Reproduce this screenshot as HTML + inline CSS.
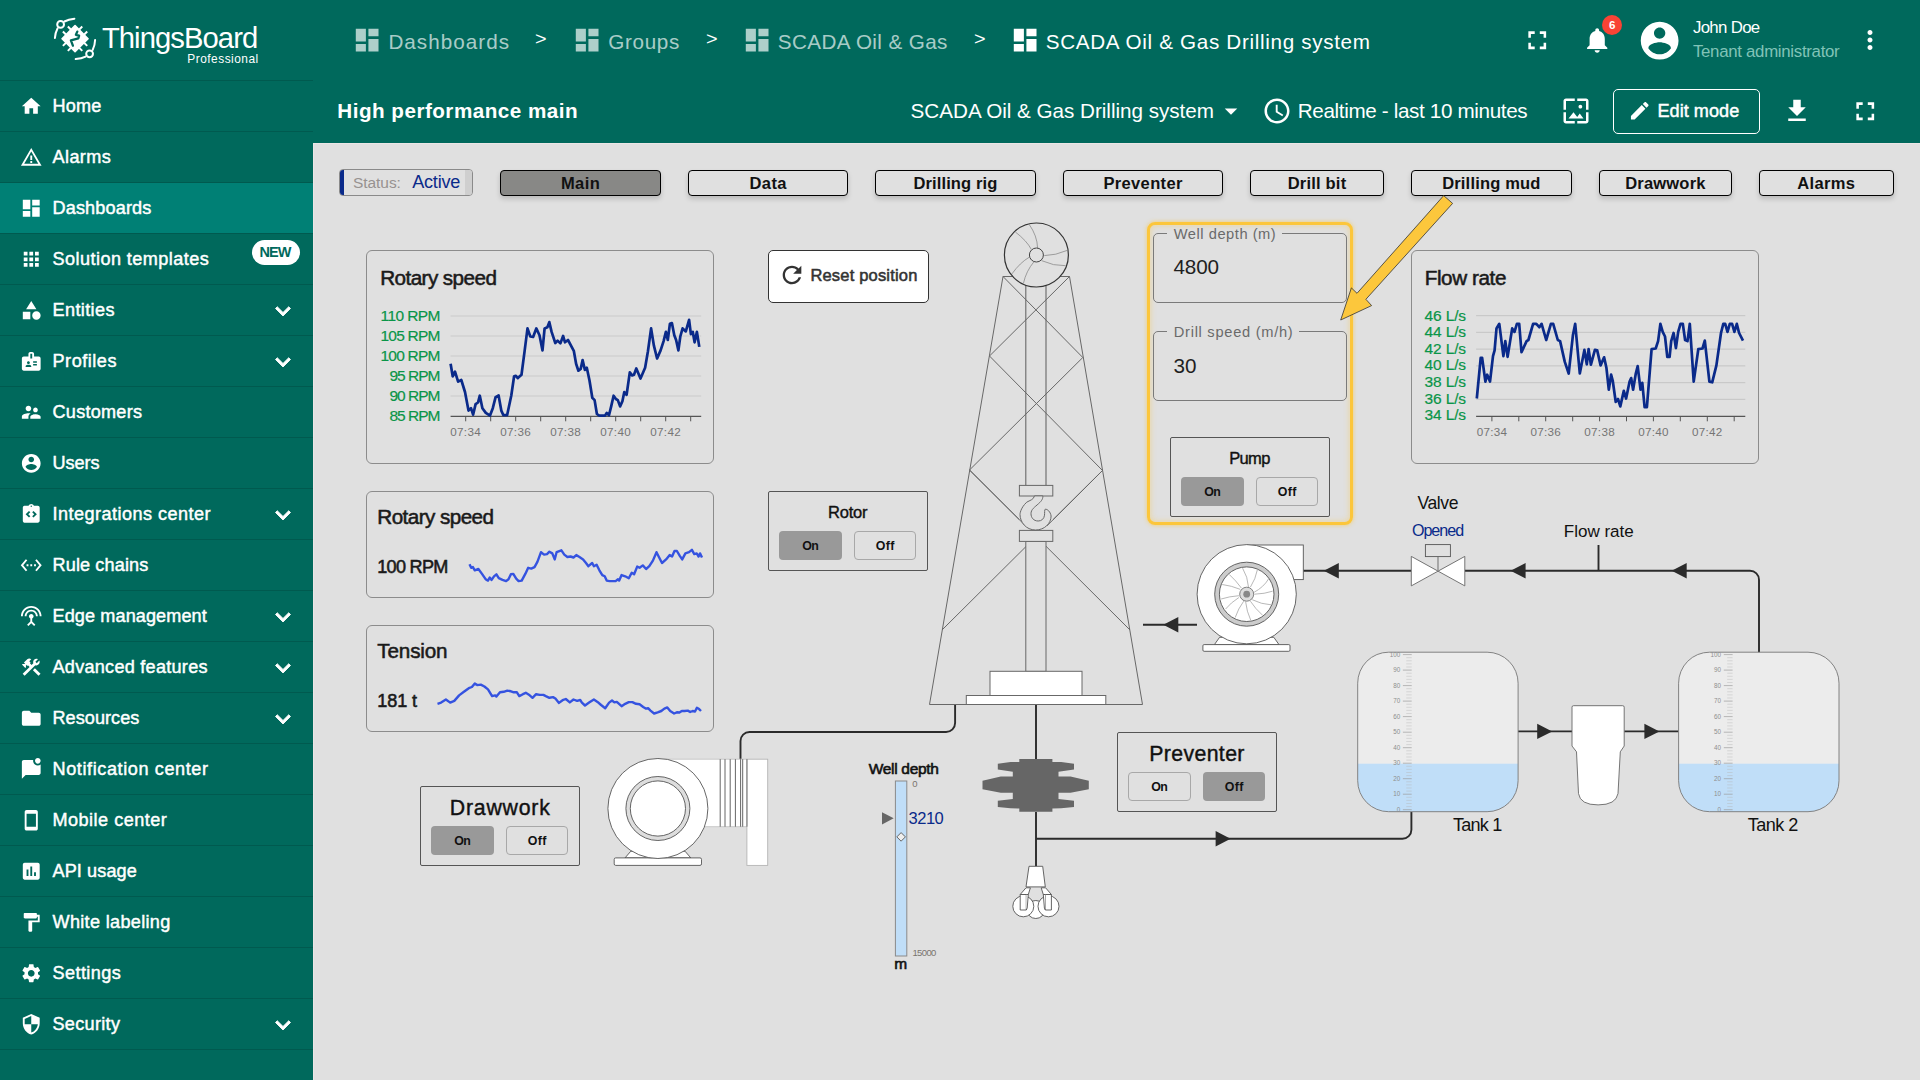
<!DOCTYPE html>
<html lang="en"><head><meta charset="utf-8"><title>ThingsBoard - SCADA Oil &amp; Gas Drilling system</title>
<style>
html,body{margin:0;padding:0}
body{width:1920px;height:1080px;overflow:hidden;background:#e0e0e0;font-family:"Liberation Sans",sans-serif;position:relative}
.t{position:absolute;line-height:20px;white-space:nowrap;margin:0}
.ic{position:absolute;display:block}
.bx{position:absolute;box-sizing:border-box}
#scene{position:absolute;left:0;top:0}
</style></head>
<body>
<div class="bx" style="left:0;top:0;width:313px;height:1080px;background:#00695c"></div>
<div class="bx" style="left:313px;top:0;width:1607px;height:143px;background:#00695c"></div>
<div class="bx" style="left:0;top:80px;width:313px;height:1px;background:rgba(0,0,0,.14)"></div>
<svg class="ic" style="left:19.95px;top:94.55px" width="22.5" height="22.5" viewBox="0 0 24 24"><path fill="#fff" d="M10 20v-6h4v6h5v-8h3L12 3 2 12h3v8z"/></svg>
<div class="bx" style="left:0;top:131px;width:313px;height:1px;background:rgba(0,0,0,.14)"></div>
<svg class="ic" style="left:19.95px;top:145.55px" width="22.5" height="22.5" viewBox="0 0 24 24"><path fill="#fff" d="M12 5.99L19.53 19H4.47L12 5.99M12 2L1 21h22L12 2zm1 14h-2v2h2v-2zm0-6h-2v5h2v-5z"/></svg>
<div class="bx" style="left:0;top:183px;width:313px;height:50px;background:#008075"></div>
<div class="bx" style="left:0;top:182px;width:313px;height:1px;background:rgba(0,0,0,.14)"></div>
<svg class="ic" style="left:19.95px;top:196.55px" width="22.5" height="22.5" viewBox="0 0 24 24"><path fill="#fff" d="M3 13h8V3H3v10zm0 8h8v-6H3v6zm10 0h8V11h-8v10zm0-18v6h8V3h-8z"/></svg>
<div class="bx" style="left:0;top:233px;width:313px;height:1px;background:rgba(0,0,0,.14)"></div>
<svg class="ic" style="left:19.95px;top:247.55px" width="22.5" height="22.5" viewBox="0 0 24 24"><path fill="#fff" d="M4 8h4V4H4v4zm6 12h4v-4h-4v4zm-6 0h4v-4H4v4zm0-6h4v-4H4v4zm6 0h4v-4h-4v4zm6-10v4h4V4h-4zm-6 4h4V4h-4v4zm6 6h4v-4h-4v4zm0 6h4v-4h-4v4z"/></svg>
<div class="bx" style="left:0;top:284px;width:313px;height:1px;background:rgba(0,0,0,.14)"></div>
<svg class="ic" style="left:19.95px;top:298.55px" width="22.5" height="22.5" viewBox="0 0 24 24"><path fill="#fff" d="M12 2l-5.5 9h11L12 2zm5.5 11c-2.49 0-4.5 2.01-4.5 4.5s2.01 4.5 4.5 4.5 4.5-2.01 4.5-4.5-2.01-4.5-4.5-4.5zM3 21.5h8v-8H3v8z"/></svg>
<svg class="ic" style="left:267.50px;top:295.50px" width="30" height="30" viewBox="0 0 24 24"><path fill="#fff" d="M16.59 8.59L12 13.17 7.41 8.59 6 10l6 6 6-6z" stroke="#fff" stroke-width="0.700"/></svg>
<div class="bx" style="left:0;top:335px;width:313px;height:1px;background:rgba(0,0,0,.14)"></div>
<svg class="ic" style="left:19.95px;top:349.55px" width="22.5" height="22.5" viewBox="0 0 24 24"><path fill="#fff" d="M20 7h-5V4c0-1.1-.9-2-2-2h-2c-1.1 0-2 .9-2 2v3H4c-1.1 0-2 .9-2 2v11c0 1.1.9 2 2 2h16c1.1 0 2-.9 2-2V9c0-1.1-.9-2-2-2zM9 12c.83 0 1.5.67 1.5 1.5S9.83 15 9 15s-1.5-.67-1.5-1.5S8.17 12 9 12zm3 6H6v-.75c0-1 2-1.5 3-1.5s3 .5 3 1.5V18zm1-9h-2V4h2v5zm5 7.5h-4V15h4v1.5zm0-3h-4V12h4v1.5z"/></svg>
<svg class="ic" style="left:267.50px;top:346.50px" width="30" height="30" viewBox="0 0 24 24"><path fill="#fff" d="M16.59 8.59L12 13.17 7.41 8.59 6 10l6 6 6-6z" stroke="#fff" stroke-width="0.700"/></svg>
<div class="bx" style="left:0;top:386px;width:313px;height:1px;background:rgba(0,0,0,.14)"></div>
<svg class="ic" style="left:19.95px;top:400.55px" width="22.5" height="22.5" viewBox="0 0 24 24"><path fill="#fff" d="M16.5 12c1.38 0 2.49-1.12 2.49-2.5S17.88 7 16.5 7C15.12 7 14 8.12 14 9.5s1.12 2.5 2.5 2.5zM9 11c1.66 0 2.99-1.34 2.99-3S10.66 5 9 5C7.34 5 6 6.34 6 8s1.34 3 3 3zm7.5 3c-1.83 0-5.5.92-5.5 2.75V19h11v-2.25c0-1.83-3.67-2.75-5.5-2.75zM9 13c-2.33 0-7 1.17-7 3.5V19h7v-2.25c0-.85.33-2.34 2.37-3.47C10.5 13.1 9.66 13 9 13z"/></svg>
<div class="bx" style="left:0;top:437px;width:313px;height:1px;background:rgba(0,0,0,.14)"></div>
<svg class="ic" style="left:19.95px;top:451.55px" width="22.5" height="22.5" viewBox="0 0 24 24"><path fill="#fff" d="M12 2C6.48 2 2 6.48 2 12s4.48 10 10 10 10-4.48 10-10S17.52 2 12 2zm0 3c1.66 0 3 1.34 3 3s-1.34 3-3 3-3-1.34-3-3 1.34-3 3-3zm0 14.2c-2.5 0-4.71-1.28-6-3.22.03-1.99 4-3.08 6-3.08 1.99 0 5.97 1.09 6 3.08-1.29 1.94-3.5 3.22-6 3.22z"/></svg>
<div class="bx" style="left:0;top:488px;width:313px;height:1px;background:rgba(0,0,0,.14)"></div>
<svg class="ic" style="left:19.95px;top:502.55px" width="22.5" height="22.5" viewBox="0 0 24 24"><path fill="#fff" d="M19 3h-4.180C14.4 1.84 13.3 1 12 1s-2.4.84-2.82 2H5c-.14 0-.27.01-.4.04-.39.08-.74.28-1.01.55-.18.18-.33.4-.43.64-.1.23-.16.49-.16.77v14c0 .27.06.54.16.78s.25.45.43.64c.27.27.62.47 1.01.55.13.02.26.03.4.03h14c1.1 0 2-.9 2-2V5c0-1.1-.9-2-2-2zm-8 11.170l-1.410 1.420L6 12l3.590-3.590L11 9.830 8.830 12 11 14.170zm1-9.920c-.41 0-.75-.34-.75-.75s.34-.75.75-.75.75.34.75.75-.34.75-.75.75zm2.410 11.340L13 14.170 15.170 12 13 9.830l1.410-1.420L18 12l-3.590 3.590z"/></svg>
<svg class="ic" style="left:267.50px;top:499.50px" width="30" height="30" viewBox="0 0 24 24"><path fill="#fff" d="M16.59 8.59L12 13.17 7.41 8.59 6 10l6 6 6-6z" stroke="#fff" stroke-width="0.700"/></svg>
<div class="bx" style="left:0;top:539px;width:313px;height:1px;background:rgba(0,0,0,.14)"></div>
<svg class="ic" style="left:19.95px;top:553.55px" width="22.5" height="22.5" viewBox="0 0 24 24"><path fill="#fff" d="M7.77 6.76L6.23 5.48.82 12l5.41 6.52 1.54-1.28L3.42 12l4.35-5.24zM7 13h2v-2H7v2zm10-2h-2v2h2v-2zm-6 2h2v-2h-2v2zm6.77-7.52l-1.54 1.28L20.58 12l-4.35 5.24 1.54 1.28L23.18 12l-5.41-6.52z"/></svg>
<div class="bx" style="left:0;top:590px;width:313px;height:1px;background:rgba(0,0,0,.14)"></div>
<svg class="ic" style="left:19.95px;top:604.55px" width="22.5" height="22.5" viewBox="0 0 24 24"><path fill="#fff" d="M12 5c-3.87 0-7 3.13-7 7h2c0-2.76 2.24-5 5-5s5 2.24 5 5h2c0-3.87-3.13-7-7-7zm1 9.29c.88-.39 1.5-1.26 1.5-2.29 0-1.38-1.12-2.5-2.5-2.5S9.5 10.62 9.5 12c0 1.02.62 1.9 1.5 2.29v3.3L7.59 21 9 22.41l3-3 3 3L16.41 21 13 17.59v-3.3zM12 1C5.93 1 1 5.93 1 12h2c0-4.97 4.03-9 9-9s9 4.030 9 9h2c0-6.070-4.930-11-11-11z"/></svg>
<svg class="ic" style="left:267.50px;top:601.50px" width="30" height="30" viewBox="0 0 24 24"><path fill="#fff" d="M16.59 8.59L12 13.17 7.41 8.59 6 10l6 6 6-6z" stroke="#fff" stroke-width="0.700"/></svg>
<div class="bx" style="left:0;top:641px;width:313px;height:1px;background:rgba(0,0,0,.14)"></div>
<svg class="ic" style="left:19.95px;top:655.55px" width="22.5" height="22.5" viewBox="0 0 24 24"><path fill="#fff" d="M13.783 15.172l2.121-2.121 5.996 5.996-2.121 2.121zM17.5 10c1.93 0 3.5-1.57 3.5-3.5 0-.58-.16-1.12-.41-1.6l-2.7 2.7-1.49-1.49 2.7-2.7c-.48-.25-1.020-.41-1.6-.41C15.570 3 14 4.570 14 6.5c0 .41.080.8.210 1.160l-1.850 1.850-1.780-1.780.710-.710-1.410-1.410L12 3.490c-1.170-1.170-3.070-1.170-4.240 0L4.220 7.030l1.410 1.410H2.810l-.710.710 3.540 3.540.710-.710V9.150l1.410 1.410.710-.710 1.780 1.780-7.410 7.410 2.120 2.120L16.340 9.790c.360.130.750.210 1.160.210z"/></svg>
<svg class="ic" style="left:267.50px;top:652.50px" width="30" height="30" viewBox="0 0 24 24"><path fill="#fff" d="M16.59 8.59L12 13.17 7.41 8.59 6 10l6 6 6-6z" stroke="#fff" stroke-width="0.700"/></svg>
<div class="bx" style="left:0;top:692px;width:313px;height:1px;background:rgba(0,0,0,.14)"></div>
<svg class="ic" style="left:19.95px;top:706.55px" width="22.5" height="22.5" viewBox="0 0 24 24"><path fill="#fff" d="M10 4H4c-1.1 0-1.99.9-1.99 2L2 18c0 1.1.9 2 2 2h16c1.1 0 2-.9 2-2V8c0-1.1-.9-2-2-2h-8l-2-2z"/></svg>
<svg class="ic" style="left:267.50px;top:703.50px" width="30" height="30" viewBox="0 0 24 24"><path fill="#fff" d="M16.59 8.59L12 13.17 7.41 8.59 6 10l6 6 6-6z" stroke="#fff" stroke-width="0.700"/></svg>
<div class="bx" style="left:0;top:743px;width:313px;height:1px;background:rgba(0,0,0,.14)"></div>
<svg class="ic" style="left:19.95px;top:757.55px" width="22.5" height="22.5" viewBox="0 0 24 24"><path fill="#fff" d="M22 6.98V16c0 1.1-.9 2-2 2H6l-4 4V4c0-1.1.9-2 2-2h10.1c-.06.32-.1.66-.1 1 0 2.76 2.24 5 5 5 1.13 0 2.16-.39 3-1.020zM16 3c0 1.660 1.340 3 3 3s3-1.340 3-3-1.340-3-3-3-3 1.340-3 3z"/></svg>
<div class="bx" style="left:0;top:794px;width:313px;height:1px;background:rgba(0,0,0,.14)"></div>
<svg class="ic" style="left:19.95px;top:808.55px" width="22.5" height="22.5" viewBox="0 0 24 24"><path fill="#fff" d="M17 1.01L7 1c-1.1 0-2 .9-2 2v18c0 1.1.9 2 2 2h10c1.1 0 2-.9 2-2V3c0-1.1-.9-1.99-2-1.990zM17 19H7V5h10v14z"/></svg>
<div class="bx" style="left:0;top:845px;width:313px;height:1px;background:rgba(0,0,0,.14)"></div>
<svg class="ic" style="left:19.95px;top:859.55px" width="22.5" height="22.5" viewBox="0 0 24 24"><path fill="#fff" d="M19 3H5c-1.1 0-2 .9-2 2v14c0 1.1.9 2 2 2h14c1.1 0 2-.9 2-2V5c0-1.1-.9-2-2-2zM9 17H7v-7h2v7zm4 0h-2V7h2v10zm4 0h-2v-4h2v4z"/></svg>
<div class="bx" style="left:0;top:896px;width:313px;height:1px;background:rgba(0,0,0,.14)"></div>
<svg class="ic" style="left:19.95px;top:910.55px" width="22.5" height="22.5" viewBox="0 0 24 24"><path fill="#fff" d="M18 4V3c0-.55-.45-1-1-1H5c-.55 0-1 .45-1 1v4c0 .55.45 1 1 1h12c.55 0 1-.45 1-1V6h1v4H9v11c0 .55.45 1 1 1h2c.55 0 1-.45 1-1v-9h8V4h-3z"/></svg>
<div class="bx" style="left:0;top:947px;width:313px;height:1px;background:rgba(0,0,0,.14)"></div>
<svg class="ic" style="left:19.95px;top:961.55px" width="22.5" height="22.5" viewBox="0 0 24 24"><path fill="#fff" d="M19.14 12.94c.04-.3.06-.61.06-.94 0-.32-.02-.64-.07-.94l2.030-1.580c.18-.14.23-.41.12-.61l-1.920-3.320c-.12-.22-.37-.29-.59-.22l-2.390.960c-.5-.38-1.030-.7-1.620-.94l-.360-2.540c-.04-.24-.24-.41-.48-.41h-3.840c-.24 0-.43.17-.47.41l-.360 2.540c-.59.24-1.130.57-1.620.94l-2.390-.960c-.22-.08-.47 0-.59.22L2.740 8.870c-.12.21-.08.47.12.61l2.030 1.580c-.05.3-.09.63-.09.94s.02.64.07.94l-2.030 1.580c-.18.14-.23.41-.12.61l1.920 3.320c.12.22.37.29.59.22l2.390-.960c.5.38 1.030.7 1.620.94l.360 2.540c.05.24.24.41.48.41h3.840c.24 0 .44-.17.47-.41l.360-2.540c.59-.24 1.130-.56 1.620-.94l2.390.960c.22.08.47 0 .59-.22l1.920-3.320c.12-.22.07-.47-.12-.61l-2.010-1.580zM12 15.600c-1.980 0-3.600-1.620-3.600-3.600s1.620-3.600 3.600-3.600 3.600 1.620 3.600 3.600-1.620 3.600-3.600 3.600z"/></svg>
<div class="bx" style="left:0;top:998px;width:313px;height:1px;background:rgba(0,0,0,.14)"></div>
<svg class="ic" style="left:19.95px;top:1012.55px" width="22.5" height="22.5" viewBox="0 0 24 24"><path fill="#fff" d="M12 1L3 5v6c0 5.55 3.84 10.74 9 12 5.16-1.26 9-6.45 9-12V5l-9-4zm0 10.990h7c-.53 4.120-3.280 7.790-7 8.940V12H5V6.300l7-3.110v8.800z"/></svg>
<svg class="ic" style="left:267.50px;top:1009.50px" width="30" height="30" viewBox="0 0 24 24"><path fill="#fff" d="M16.59 8.59L12 13.17 7.41 8.59 6 10l6 6 6-6z" stroke="#fff" stroke-width="0.700"/></svg>
<div class="bx" style="left:0;top:1049px;width:313px;height:1px;background:rgba(0,0,0,.14)"></div>
<div class="bx" style="left:313px;top:143px;width:1607px;height:937px;border-left:1px solid #ebe6e6;border-top:1px solid #ebe6e6"></div>
<div class="bx" style="left:252px;top:239.5px;width:48px;height:25px;border-radius:13px;background:#fff"></div>
<svg class="ic" style="left:50px;top:14px" width="48" height="52" viewBox="50 14 48 52">
<g fill="none" stroke="#fff" stroke-width="2" stroke-linecap="round">
<path d="M54.900 38 Q55.300 32.500 57.600 28.200"/><path d="M64.400 21.500 Q68.500 19.400 74.400 18.700"/>
<circle cx="60.600" cy="24.400" r="3.400"/>
<path d="M95.100 40 Q94.900 45.500 92.700 49.900"/><path d="M85.600 56.600 Q81.500 58.700 75.700 59.100"/>
<circle cx="89.600" cy="53.800" r="3.400"/>
</g>
<g transform="translate(75.050 38.700) rotate(45)">
<g stroke="#fff" stroke-width="2" stroke-linecap="butt">
<path d="M-3.500 -13.700V13.700M3.500 -13.700V13.700M-13.700 -3.500H13.700M-13.700 3.500H13.700"/>
</g>
<rect x="-10" y="-10" width="20" height="20" rx="0.800" fill="#fff"/>
</g>
<path d="M77.300 31.600L75.900 34.800L79.100 35.600L78.400 38.300L70.900 40.400L72.900 45.700" fill="none" stroke="#00695c" stroke-width="2.300" stroke-linecap="round" stroke-linejoin="round"/>
</svg>
<svg class="ic" style="left:352.45px;top:24.85px" width="30.3" height="30.3" viewBox="0 0 24 24"><path fill="rgba(255,255,255,.68)" d="M3 13h8V3H3v10zm0 8h8v-6H3v6zm10 0h8V11h-8v10zm0-18v6h8V3h-8z"/></svg>
<svg class="ic" style="left:572.05px;top:24.85px" width="30.3" height="30.3" viewBox="0 0 24 24"><path fill="rgba(255,255,255,.68)" d="M3 13h8V3H3v10zm0 8h8v-6H3v6zm10 0h8V11h-8v10zm0-18v6h8V3h-8z"/></svg>
<svg class="ic" style="left:742.45px;top:24.85px" width="30.3" height="30.3" viewBox="0 0 24 24"><path fill="rgba(255,255,255,.68)" d="M3 13h8V3H3v10zm0 8h8v-6H3v6zm10 0h8V11h-8v10zm0-18v6h8V3h-8z"/></svg>
<svg class="ic" style="left:1010.05px;top:24.85px" width="30.3" height="30.3" viewBox="0 0 24 24"><path fill="#fff" d="M3 13h8V3H3v10zm0 8h8v-6H3v6zm10 0h8V11h-8v10zm0-18v6h8V3h-8z"/></svg>
<svg class="ic" style="left:1522.15px;top:24.75px" width="30.5" height="30.5" viewBox="0 0 24 24"><path fill="#fff" d="M7 14H5v5h5v-2H7v-3zm-2-4h2V7h3V5H5v5zm12 7h-3v2h5v-5h-2v3zM14 5v2h3v3h2V5h-5z"/></svg>
<svg class="ic" style="left:1582.10px;top:24.80px" width="30.4" height="30.4" viewBox="0 0 24 24"><path fill="#fff" d="M12 22c1.1 0 2-.9 2-2h-4c0 1.1.89 2 2 2zm6-6v-5c0-3.070-1.640-5.640-4.500-6.320V4c0-.83-.67-1.500-1.500-1.500s-1.500.670-1.500 1.500v.680C7.630 5.360 6 7.920 6 11v5l-2 2v1h16v-1l-2-2z"/></svg>
<div class="bx" style="left:1602px;top:15px;width:20px;height:20px;border-radius:10px;background:#f84335"></div>
<svg class="ic" style="left:1637.45px;top:17.75px" width="45.3" height="45.3" viewBox="0 0 24 24"><path fill="#fff" d="M12 2C6.48 2 2 6.48 2 12s4.48 10 10 10 10-4.48 10-10S17.52 2 12 2zm0 3c1.66 0 3 1.34 3 3s-1.34 3-3 3-3-1.34-3-3 1.34-3 3-3zm0 14.2c-2.5 0-4.71-1.28-6-3.22.03-1.99 4-3.08 6-3.08 1.99 0 5.97 1.09 6 3.08-1.29 1.94-3.5 3.22-6 3.22z"/></svg>
<svg class="ic" style="left:1854.80px;top:25.40px" width="30" height="30" viewBox="0 0 24 24"><path fill="#fff" d="M12 8c1.1 0 2-.9 2-2s-.9-2-2-2-2 .9-2 2 .9 2 2 2zm0 2c-1.1 0-2 .9-2 2s.9 2 2 2 2-.9 2-2-.9-2-2-2zm0 6c-1.1 0-2 .9-2 2s.9 2 2 2 2-.9 2-2-.9-2-2-2z"/></svg>
<svg class="ic" style="left:1215.50px;top:95.50px" width="30" height="30" viewBox="0 0 24 24"><path fill="#fff" d="M7 10l5 5 5-5z"/></svg>
<svg class="ic" style="left:1262.40px;top:96.00px" width="30" height="30" viewBox="0 0 24 24"><path fill="#fff" d="M11.99 2C6.47 2 2 6.48 2 12s4.47 10 9.99 10C17.52 22 22 17.52 22 12S17.52 2 11.99 2zM12 20c-4.42 0-8-3.58-8-8s3.58-8 8-8 8 3.58 8 8-3.58 8-8 8zm.5-13H11v6l5.25 3.150.750-1.230-4.500-2.670z"/></svg>
<svg class="ic" style="left:1560.60px;top:96.00px" width="30" height="30" viewBox="0 0 24 24"><path fill="#fff" d="M4 4h7V2H4c-1.1 0-2 .9-2 2v7h2V4zm6 9l-4 5h12l-3-4-2.030 2.710L10 13zm7-4.500c0-.83-.67-1.500-1.500-1.500S14 7.670 14 8.500s.670 1.500 1.500 1.500S17 9.330 17 8.500zM20 2h-7v2h7v7h2V4c0-1.100-.900-2-2-2zm0 18h-7v2h7c1.100 0 2-.900 2-2v-7h-2v7zM4 13H2v7c0 1.100.900 2 2 2h7v-2H4v-7z"/></svg>
<div class="bx" style="left:1613px;top:89px;width:147px;height:45px;border:1px solid #fff;border-radius:5px"></div>
<svg class="ic" style="left:1627.55px;top:98.85px" width="23.5" height="23.5" viewBox="0 0 24 24"><path fill="#fff" d="M3 17.25V21h3.750L17.810 9.940l-3.750-3.750L3 17.250zM20.710 7.040c.390-.390.390-1.020 0-1.410l-2.340-2.340c-.390-.390-1.020-.390-1.410 0l-1.830 1.830 3.750 3.750 1.830-1.830z"/></svg>
<svg class="ic" style="left:1782.40px;top:96.00px" width="30" height="30" viewBox="0 0 24 24"><path fill="#fff" d="M19 9h-4V3H9v6H5l7 7 7-7zM5 18v2h14v-2H5z"/></svg>
<svg class="ic" style="left:1849.75px;top:95.75px" width="30.5" height="30.5" viewBox="0 0 24 24"><path fill="#fff" d="M7 14H5v5h5v-2H7v-3zm-2-4h2V7h3V5H5v5zm12 7h-3v2h5v-5h-2v3zM14 5v2h3v3h2V5h-5z"/></svg>
<div class="bx" style="left:339.4px;top:169.3px;width:133.2px;height:27px;border:1px solid #8a8a8a;border-radius:4px;overflow:hidden;background:#e0e0e0"><div style="position:absolute;left:0;top:0;width:4px;height:100%;background:#0a2a8a"></div><div style="position:absolute;right:0;top:0;width:7px;height:100%;background:#cfcfcf"></div></div>
<div class="bx" style="left:500px;top:170px;width:161px;height:26px;border:1px solid #000;border-radius:4px;background:#888886;box-shadow:0 3px 5px rgba(0,0,0,.17)"></div>
<div class="bx" style="left:688px;top:170px;width:160px;height:26px;border:1px solid #000;border-radius:4px;background:#e0e0e0;box-shadow:0 3px 5px rgba(0,0,0,.17)"></div>
<div class="bx" style="left:875px;top:170px;width:161px;height:26px;border:1px solid #000;border-radius:4px;background:#e0e0e0;box-shadow:0 3px 5px rgba(0,0,0,.17)"></div>
<div class="bx" style="left:1063px;top:170px;width:160px;height:26px;border:1px solid #000;border-radius:4px;background:#e0e0e0;box-shadow:0 3px 5px rgba(0,0,0,.17)"></div>
<div class="bx" style="left:1250px;top:170px;width:134px;height:26px;border:1px solid #000;border-radius:4px;background:#e0e0e0;box-shadow:0 3px 5px rgba(0,0,0,.17)"></div>
<div class="bx" style="left:1411px;top:170px;width:161px;height:26px;border:1px solid #000;border-radius:4px;background:#e0e0e0;box-shadow:0 3px 5px rgba(0,0,0,.17)"></div>
<div class="bx" style="left:1599px;top:170px;width:133px;height:26px;border:1px solid #000;border-radius:4px;background:#e0e0e0;box-shadow:0 3px 5px rgba(0,0,0,.17)"></div>
<div class="bx" style="left:1759px;top:170px;width:135px;height:26px;border:1px solid #000;border-radius:4px;background:#e0e0e0;box-shadow:0 3px 5px rgba(0,0,0,.17)"></div>
<div class="bx" style="left:366px;top:250px;width:348.0px;height:214.0px;border:1px solid #8c8c8c;border-radius:6px"></div>
<div class="bx" style="left:366px;top:491px;width:348.0px;height:107.0px;border:1px solid #8c8c8c;border-radius:6px"></div>
<div class="bx" style="left:366px;top:625px;width:348.0px;height:107.0px;border:1px solid #8c8c8c;border-radius:6px"></div>
<div class="bx" style="left:1411px;top:250px;width:348.0px;height:214.0px;border:1px solid #8c8c8c;border-radius:6px"></div>
<div class="bx" style="left:767.9px;top:249.8px;width:161.2px;height:53px;border:1px solid #333;border-radius:5px;background:#fff"></div>
<svg class="ic" style="left:778.00px;top:261.20px" width="28" height="28" viewBox="0 0 24 24"><path fill="#333" d="M17.65 6.35C16.2 4.9 14.21 4 12 4c-4.42 0-7.99 3.58-7.990 8s3.570 8 7.990 8c3.730 0 6.840-2.550 7.730-6h-2.080c-.820 2.330-3.040 4-5.650 4-3.310 0-6-2.690-6-6s2.690-6 6-6c1.660 0 3.140.690 4.220 1.780L13 11h7V4l-2.350 2.350z"/></svg>
<div class="bx" style="left:768px;top:491px;width:160px;height:80px;border:1px solid #555;border-radius:2px"></div>
<div class="bx" style="left:779px;top:531px;width:63px;height:29px;border-radius:4px;background:#999"></div>
<div class="bx" style="left:854px;top:531px;width:62px;height:29px;border-radius:4px;border:1px solid #a8a8a8"></div>
<div class="bx" style="left:1170px;top:437px;width:160px;height:80px;border:1px solid #555;border-radius:2px"></div>
<div class="bx" style="left:1181px;top:477px;width:63px;height:29px;border-radius:4px;background:#999"></div>
<div class="bx" style="left:1256px;top:477px;width:62px;height:29px;border-radius:4px;border:1px solid #a8a8a8"></div>
<div class="bx" style="left:1117px;top:732px;width:160px;height:80px;border:1px solid #555;border-radius:2px"></div>
<div class="bx" style="left:1128px;top:772px;width:63px;height:29px;border-radius:4px;border:1px solid #a8a8a8"></div>
<div class="bx" style="left:1203px;top:772px;width:62px;height:29px;border-radius:4px;background:#999"></div>
<div class="bx" style="left:420px;top:786px;width:160px;height:80px;border:1px solid #555;border-radius:2px"></div>
<div class="bx" style="left:431px;top:826px;width:63px;height:29px;border-radius:4px;background:#999"></div>
<div class="bx" style="left:506px;top:826px;width:62px;height:29px;border-radius:4px;border:1px solid #a8a8a8"></div>
<div class="bx" style="left:1147px;top:222px;width:206px;height:303px;border:3px solid #fcc63b;border-radius:8px;box-shadow:0 0 4px rgba(252,198,59,.7),inset 0 0 6px rgba(252,198,59,.45)"></div>
<div class="bx" style="left:1153px;top:233px;width:194px;height:70px;border:1px solid #7a7a7a;border-radius:5px"></div>
<div class="bx" style="left:1167px;top:231px;width:115.0px;height:5px;background:#e0e0e0"></div>
<div class="bx" style="left:1153px;top:331px;width:194px;height:70px;border:1px solid #7a7a7a;border-radius:5px"></div>
<div class="bx" style="left:1167px;top:329px;width:132.0px;height:5px;background:#e0e0e0"></div>
<svg id="scene" width="1920" height="1080" viewBox="0 0 1920 1080"><line x1="450.6" x2="701.2" y1="316.0" y2="316.0" stroke="#c9c9c9" stroke-width="1.2"/>
<line x1="450.6" x2="701.2" y1="336.0" y2="336.0" stroke="#c9c9c9" stroke-width="1.2"/>
<line x1="450.6" x2="701.2" y1="356.0" y2="356.0" stroke="#c9c9c9" stroke-width="1.2"/>
<line x1="450.6" x2="701.2" y1="376.0" y2="376.0" stroke="#c9c9c9" stroke-width="1.2"/>
<line x1="450.6" x2="701.2" y1="396.0" y2="396.0" stroke="#c9c9c9" stroke-width="1.2"/>
<line x1="450.6" x2="701.2" y1="416.300" y2="416.300" stroke="#555" stroke-width="1.300"/>
<line x1="465.7" x2="465.7" y1="416" y2="421.300" stroke="#555" stroke-width="1"/>
<line x1="490.7" x2="490.7" y1="416" y2="421.300" stroke="#555" stroke-width="1"/>
<line x1="515.7" x2="515.7" y1="416" y2="421.300" stroke="#555" stroke-width="1"/>
<line x1="540.7" x2="540.7" y1="416" y2="421.300" stroke="#555" stroke-width="1"/>
<line x1="565.7" x2="565.7" y1="416" y2="421.300" stroke="#555" stroke-width="1"/>
<line x1="590.7" x2="590.7" y1="416" y2="421.300" stroke="#555" stroke-width="1"/>
<line x1="615.7" x2="615.7" y1="416" y2="421.300" stroke="#555" stroke-width="1"/>
<line x1="640.7" x2="640.7" y1="416" y2="421.300" stroke="#555" stroke-width="1"/>
<line x1="665.7" x2="665.7" y1="416" y2="421.300" stroke="#555" stroke-width="1"/>
<line x1="690.7" x2="690.7" y1="416" y2="421.300" stroke="#555" stroke-width="1"/>
<polyline fill="none" stroke="#0a2a8a" stroke-width="2.7" stroke-linejoin="round" points="450.6,363.8 452.7,376.3 455.0,371.7 458.1,381.6 461.3,380.0 465.0,392.0 468.5,410.6 471.0,408.2 473.1,414.7 475.6,404.1 478.0,402.5 479.8,395.7 482.4,408.2 485.8,412.9 490.0,415.6 492.8,408.2 495.6,397.1 498.6,395.5 501.3,410.6 503.4,415.2 507.1,415.2 511.3,395.5 514.1,376.3 515.9,375.8 517.8,378.1 521.5,374.7 524.7,350.4 527.5,328.4 530.3,336.5 533.1,336.9 536.3,328.4 539.5,335.3 542.5,350.4 544.6,328.4 547.4,327.2 549.3,322.1 551.6,331.9 555.3,343.0 557.6,340.6 560.4,343.4 563.1,336.0 565.0,342.3 568.0,340.0 571.0,345.7 573.8,350.8 576.1,363.8 578.4,370.7 580.7,368.9 582.6,360.1 584.9,370.0 586.8,367.7 589.5,380.5 592.3,397.8 594.6,400.1 596.9,414.0 599.3,415.6 605.0,415.6 606.7,412.9 609.0,415.2 611.3,405.9 613.6,395.7 615.9,399.0 617.8,400.1 620.1,406.4 622.4,401.3 624.3,392.0 626.6,394.8 629.8,372.4 632.1,375.4 634.0,374.7 636.3,368.4 640.5,378.6 645.1,367.7 647.9,351.5 651.1,328.4 653.9,345.7 657.1,358.5 660.6,350.4 663.6,341.1 665.9,331.9 667.8,340.0 669.9,323.8 671.9,323.1 674.3,335.3 676.1,340.0 678.4,350.4 680.3,336.5 682.6,328.4 685.8,331.4 689.1,319.8 690.9,334.2 692.8,331.9 694.6,342.3 696.9,331.9 699.3,346.9"/>
<line x1="1476.1" x2="1745.3" y1="315.7" y2="315.7" stroke="#c9c9c9" stroke-width="1.2"/>
<line x1="1476.1" x2="1745.3" y1="332.4" y2="332.4" stroke="#c9c9c9" stroke-width="1.2"/>
<line x1="1476.1" x2="1745.3" y1="349.2" y2="349.2" stroke="#c9c9c9" stroke-width="1.2"/>
<line x1="1476.1" x2="1745.3" y1="365.9" y2="365.9" stroke="#c9c9c9" stroke-width="1.2"/>
<line x1="1476.1" x2="1745.3" y1="382.7" y2="382.7" stroke="#c9c9c9" stroke-width="1.2"/>
<line x1="1476.1" x2="1745.3" y1="399.4" y2="399.4" stroke="#c9c9c9" stroke-width="1.2"/>
<line x1="1476.1" x2="1745.3" y1="416.300" y2="416.300" stroke="#555" stroke-width="1.300"/>
<line x1="1491.9" x2="1491.9" y1="416" y2="421.300" stroke="#555" stroke-width="1"/>
<line x1="1518.8" x2="1518.8" y1="416" y2="421.300" stroke="#555" stroke-width="1"/>
<line x1="1545.7" x2="1545.7" y1="416" y2="421.300" stroke="#555" stroke-width="1"/>
<line x1="1572.7" x2="1572.7" y1="416" y2="421.300" stroke="#555" stroke-width="1"/>
<line x1="1599.6" x2="1599.6" y1="416" y2="421.300" stroke="#555" stroke-width="1"/>
<line x1="1626.5" x2="1626.5" y1="416" y2="421.300" stroke="#555" stroke-width="1"/>
<line x1="1653.4" x2="1653.4" y1="416" y2="421.300" stroke="#555" stroke-width="1"/>
<line x1="1680.3" x2="1680.3" y1="416" y2="421.300" stroke="#555" stroke-width="1"/>
<line x1="1707.3" x2="1707.3" y1="416" y2="421.300" stroke="#555" stroke-width="1"/>
<line x1="1734.2" x2="1734.2" y1="416" y2="421.300" stroke="#555" stroke-width="1"/>
<polyline fill="none" stroke="#0a2a8a" stroke-width="2.7" stroke-linejoin="round" points="1476.8,398.5 1480.7,357.8 1482.1,357.8 1485.4,381.6 1487.2,374.7 1490.0,381.6 1493.0,356.2 1494.6,350.4 1496.5,328.4 1499.3,323.8 1503.4,356.2 1505.3,341.1 1507.6,356.9 1512.2,328.4 1514.5,331.9 1516.9,323.8 1519.2,323.8 1521.5,352.2 1526.6,341.1 1528.4,340.0 1533.1,323.8 1536.3,323.8 1539.3,327.2 1541.6,323.8 1546.2,340.0 1550.9,323.8 1553.2,323.8 1557.8,340.0 1560.1,341.1 1564.8,361.9 1568.7,373.5 1572.9,335.3 1575.2,323.8 1579.8,373.5 1584.4,349.9 1586.8,364.3 1588.6,349.2 1590.9,364.7 1594.9,349.9 1597.2,350.4 1600.6,365.4 1604.1,357.3 1606.4,367.7 1608.8,389.7 1611.1,374.7 1612.7,380.5 1615.7,401.8 1618.0,399.0 1620.3,406.4 1623.8,390.9 1626.1,398.5 1629.6,381.6 1631.2,378.1 1633.1,389.7 1635.8,373.5 1637.7,366.1 1640.5,389.7 1642.3,382.8 1644.6,407.1 1646.9,407.1 1651.6,349.2 1655.7,348.5 1658.1,341.1 1660.4,323.8 1662.7,331.9 1665.0,336.5 1667.3,356.9 1669.6,356.9 1671.2,341.1 1673.6,333.0 1675.9,348.1 1678.2,331.9 1680.5,323.8 1682.8,323.8 1685.1,340.0 1687.5,341.1 1689.8,323.8 1693.7,381.6 1698.3,349.2 1702.5,348.5 1704.8,340.6 1709.4,381.6 1712.2,382.3 1716.4,365.4 1721.0,333.0 1723.3,323.8 1725.2,323.8 1727.5,331.9 1729.8,323.8 1732.1,323.8 1734.4,331.9 1736.8,323.8 1739.1,333.0 1743.0,340.6"/>
<polyline fill="none" stroke="#3553e0" stroke-width="2.4" stroke-linejoin="round" points="469.5,564.2 471.2,567.8 472.9,567.1 474.8,570.3 478.4,569.0 482.0,573.9 485.6,579.2 488.0,580.6 489.7,577.5 491.6,579.9 494.0,576.3 496.4,574.3 498.8,578.2 502.5,579.9 506.1,581.1 508.5,579.2 510.9,574.3 513.3,573.9 516.2,578.7 518.6,581.1 521.7,580.6 525.3,573.9 528.2,567.8 531.3,568.6 534.5,567.1 537.4,561.8 541.0,552.2 544.1,554.6 547.0,554.1 549.4,551.7 552.3,553.4 554.7,559.4 556.6,552.2 561.4,550.3 564.3,554.6 567.4,557.0 570.6,556.5 573.5,557.5 576.3,555.1 579.5,557.0 583.1,559.4 586.0,563.0 588.4,566.2 592.2,563.0 593.9,566.2 596.6,564.7 599.4,570.3 602.3,575.1 604.7,576.3 606.7,580.6 609.6,581.1 615.6,581.1 618.0,579.2 619.2,580.6 621.6,575.1 625.2,576.3 628.8,578.2 631.7,572.7 634.1,574.3 637.2,566.6 639.6,567.8 642.8,565.4 646.1,569.0 649.3,566.2 652.9,560.6 656.5,552.2 658.9,557.0 662.0,563.0 666.1,559.4 669.7,555.1 672.1,556.5 674.5,551.0 676.9,551.0 679.8,555.8 682.2,559.4 685.4,553.4 689.0,552.2 691.9,549.8 694.3,554.1 696.7,553.4 698.6,556.5 700.0,553.4 702.0,557.5"/>
<polyline fill="none" stroke="#3553e0" stroke-width="2.4" stroke-linejoin="round" points="437.5,703.8 441.1,702.6 445.9,699.5 450.2,702.6 454.3,700.9 459.1,695.4 463.9,691.8 468.8,688.2 471.9,687.0 474.8,683.4 477.2,685.1 480.8,684.6 484.4,686.5 488.0,689.4 492.1,696.1 495.2,695.4 496.4,696.6 500.0,692.3 503.7,691.8 507.3,690.6 510.9,691.3 513.8,692.3 516.9,692.3 519.3,696.1 522.9,694.2 525.8,692.8 528.9,694.7 532.5,697.8 536.1,694.2 539.8,694.9 543.4,694.9 545.8,696.1 549.4,697.8 553.0,697.1 555.4,698.5 559.0,702.9 562.6,700.2 565.8,699.0 569.8,702.4 573.5,699.5 577.1,700.9 580.2,700.0 581.9,702.6 585.0,705.5 589.1,702.6 593.9,699.5 597.5,701.9 601.1,705.0 605.2,708.2 609.1,702.6 612.0,700.5 614.4,702.4 616.8,701.9 621.6,706.2 625.2,703.8 628.8,702.1 632.4,702.1 636.0,703.8 639.6,704.3 643.2,707.0 645.7,708.6 648.1,708.2 650.5,710.6 654.1,713.5 657.7,712.3 661.3,711.0 664.4,708.6 667.3,707.4 670.2,711.0 674.1,713.5 676.9,712.3 679.4,712.5 681.8,711.0 684.6,711.0 687.8,710.6 690.2,712.0 692.6,711.0 695.0,711.5 696.9,707.7 699.1,709.1 701.0,711.0"/>
<g fill="none" stroke="#686868" stroke-width="1">
<path d="M1003 276.500L929.5 704.500H1142.500L1069.500 276.500Z"/>
<path d="M1003 276.500L1082.800 357.500L969.500 470L1130 630M1069.500 276.500L989.500 356L1102.500 470.500L942 630"/>
</g>
<path d="M1025.800 280V485.400M1046 280V485.400" fill="none" stroke="#686868" stroke-width="1.100"/>
<rect x="1025.800" y="541.400" width="20.200" height="130" fill="#e0e0e0" stroke="#686868" stroke-width="1"/>
<circle cx="1036.400" cy="255" r="32" fill="#e0e0e0" stroke="#333" stroke-width="1.200"/>
<path fill="none" stroke="#8a8a8a" stroke-width="0.800" d="M1037.6 248.0Q1037.2 235.7 1029.1 224.3M1031.3 249.4Q1026.9 240.9 1015.4 232.0M1044.3 255.6Q1055.7 255.4 1067.2 250.4M1041.5 260.6Q1053.5 266.1 1065.7 265.7M1033.9 261.8Q1026.1 271.3 1023.5 283.1M1029.3 257.2Q1020.2 262.4 1011.9 273.9"/>
<circle cx="1036.400" cy="255" r="7" fill="#e0e0e0" stroke="#444" stroke-width="1"/>
<rect x="1019" y="496" width="34" height="35" fill="#e0e0e0"/>
<path fill="none" stroke="#686868" stroke-width="1" d="M969.500 470L1025 525.300M1102.500 470.500L1047 525.800"/>
<rect x="1019.400" y="485.400" width="33.400" height="10.600" fill="#e0e0e0" stroke="#686868" stroke-width="1"/>
<rect x="1019.400" y="530.400" width="33.400" height="11" fill="#e0e0e0" stroke="#686868" stroke-width="1"/>
<path fill="#e0e0e0" stroke="#686868" stroke-width="1" d="M1034.500 495.900C1033.700 499.700 1029.700 500.400 1026.700 502.200C1020 508.500 1020 514.500 1020 514.500C1020 521.900 1025.900 530 1035.600 530C1044.500 530 1051.100 523.400 1051.100 516C1050.400 511.500 1047.400 509.300 1045.400 509.100C1044.300 509.700 1044.800 513 1044.500 515.200C1044.100 518.900 1041.500 521 1038.200 521C1033.400 521 1031 517.400 1031 513.700C1031 509.300 1034.800 507.100 1038.500 503.700C1042.300 500.400 1043 498.200 1042.800 495.900Z"/>
<rect x="990" y="671.300" width="92" height="24.300" fill="#fff" stroke="#686868" stroke-width="1"/>
<rect x="966.300" y="695.500" width="139.500" height="9" fill="#fff" stroke="#686868" stroke-width="1"/>
<g fill="none" stroke="#2b2b2b" stroke-width="1.900">
<path d="M955.100 705V723A9 9 0 0 1 946.100 732H749.500A9 9 0 0 0 740.500 741V759"/>
<path d="M1036 705V759.500M1036 812V866.500"/>
<path d="M1036 838.800H1402.400A9 9 0 0 0 1411.400 829.800V811.700"/>
<path d="M1143 624.800H1197"/>
<path d="M1303.300 570.700H1411.300M1464.800 570.700H1750A9 9 0 0 1 1759 579.700V652.400"/>
<path d="M1598.500 545V570.700"/>
<path d="M1518 731.400H1572M1624.200 731.400H1678.700"/>
</g>
<polygon fill="#2b2b2b" points="1163.3,624.8 1178.3,617.1 1178.3,632.5"/>
<polygon fill="#2b2b2b" points="1323.8,570.7 1338.8,563.0 1338.8,578.4"/>
<polygon fill="#2b2b2b" points="1510.6,570.7 1525.6,563.0 1525.6,578.4"/>
<polygon fill="#2b2b2b" points="1671.7,570.7 1686.7,563.0 1686.7,578.4"/>
<polygon fill="#2b2b2b" points="1230.6,838.8 1215.6,831.1 1215.6,846.5"/>
<polygon fill="#2b2b2b" points="1552.2,731.4 1537.2,723.7 1537.2,739.1"/>
<polygon fill="#2b2b2b" points="1659.4,731.4 1644.4,723.7 1644.4,739.1"/>
<polygon fill="#666" points="1019.3,759.0 1052.4,759.0 1052.4,762.0 1061.2,762.0 1074.0,763.8 1074.0,769.6 1058.5,771.7 1058.5,776.6 1070.5,776.6 1088.8,780.8 1088.8,789.3 1070.5,792.8 1058.5,792.8 1058.5,798.9 1074.0,800.7 1074.0,806.9 1061.2,808.3 1052.4,808.6 1052.4,811.8 1019.3,811.8 1019.3,808.6 1010.5,808.3 997.8,806.9 997.8,800.7 1012.8,798.9 1012.8,792.8 1000.8,792.8 982.5,789.3 982.5,780.8 1000.8,776.6 1012.8,776.6 1012.8,771.7 997.8,769.6 997.8,763.8 1010.5,762.0 1019.3,762.0"/>
<g fill="#fff" stroke="#555" stroke-width="0.900">
<circle cx="1035.800" cy="909.500" r="9"/>
<circle cx="1023.300" cy="906.300" r="10.500"/><circle cx="1048.500" cy="906.300" r="10.500"/>
<path d="M1029 866.300H1042.700L1045.300 886.900H1026Z"/>
<path d="M1026 887.800H1030.400L1028.300 894.500H1020.200Z"/><path d="M1020.200 894.500H1026.300V910H1020.200Z"/><path d="M1026.300 894.500L1028.300 894.500L1027.200 908L1026.300 910"/>
<path d="M1045.600 887.800H1041.200L1043.300 894.500H1051.400Z"/><path d="M1051.400 894.500H1045.300V910H1051.400Z"/><path d="M1045.300 894.500L1043.300 894.500L1044.400 908L1045.300 910"/>
</g>
<rect x="895.400" y="781" width="11.400" height="175" fill="#c0def8" stroke="#8a8a8a" stroke-width="1"/>
<polygon fill="#666" points="882,812.200 882,824.600 893.700,818.300"/>
<polygon fill="#eee" stroke="#555" stroke-width="0.900" points="901.100,832.600 905.400,836.900 901.100,841.200 896.800,836.900"/>
<g fill="#fff" stroke="#555" stroke-width="0.900">
<rect x="746.900" y="759.200" width="20.800" height="106.200" stroke="#b5b5b5"/>
<rect x="657.900" y="759.200" width="89" height="67.500" stroke="none"/>
<path d="M657.900 759.200H746.900M700 826.700H746.900" fill="none" stroke="#c4c4c4"/>
<line x1="720.2" x2="720.2" y1="759.200" y2="826.700"/>
<line x1="725" x2="725" y1="759.200" y2="826.700"/>
<line x1="730.2" x2="730.2" y1="759.200" y2="826.700"/>
<line x1="735.4" x2="735.4" y1="759.200" y2="826.700"/>
<line x1="740.6" x2="740.6" y1="759.200" y2="826.700"/>
<line x1="742.7" x2="742.7" y1="759.200" y2="826.700"/>
<line x1="746.9" x2="746.9" y1="759.200" y2="826.700"/>
<path d="M630.800 851.200L625 857.900H690.800L685 851.200Z"/>
<rect x="614.200" y="857.900" width="87.300" height="7.500" rx="1.500"/>
<circle cx="657.900" cy="808.500" r="50"/>
<circle cx="657.900" cy="808.500" r="32" fill="#ddd"/>
<circle cx="657.900" cy="808.500" r="27.600"/>
</g>
<g fill="#fff" stroke="#555" stroke-width="0.900">
<rect x="1246.700" y="545" width="56.600" height="34.600"/>
<path d="M1219.600 637.300L1214.400 644.600H1279L1273.800 637.300Z"/>
<rect x="1202.900" y="644.600" width="87.100" height="6.700" rx="1.200"/>
<circle cx="1246.700" cy="594.200" r="49.600"/>
<circle cx="1246.700" cy="594.200" r="32" fill="#ccc"/>
<circle cx="1246.700" cy="594.200" r="27.300"/>
</g>
<path fill="none" stroke="#9a9a9a" stroke-width="0.700" d="M1248.5 587.1Q1247.8 576.8 1242.6 568.2M1250.4 587.1Q1255.6 579.0 1257.4 569.7M1254.1 592.3Q1263.7 587.1 1268.5 579.0M1254.4 594.2Q1264.8 593.8 1272.6 591.2M1252.2 599.7Q1261.1 604.2 1271.5 604.9M1250.4 601.2Q1255.2 608.6 1262.6 615.3M1245.6 601.6Q1246.7 611.6 1250.7 620.1M1243.7 601.2Q1238.2 608.6 1235.2 617.5M1238.9 597.5Q1230.7 602.7 1225.6 609.0M1238.9 595.7Q1229.3 596.4 1221.1 599.0M1240.4 589.4Q1231.5 585.7 1222.2 584.5M1241.5 588.2Q1235.9 580.5 1229.3 574.5"/>
<circle cx="1246.700" cy="594.200" r="7" fill="#ddd" stroke="#666" stroke-width="0.800"/><circle cx="1246.700" cy="594.200" r="3.400" fill="#888"/>
<g fill="#fff" stroke="#666" stroke-width="0.900">
<path d="M1411.300 556.400V585.900L1464.800 556.400V585.900Z"/>
<path d="M1438 570.700V556.700" fill="none" stroke="#888" stroke-width="1.300"/>
<rect x="1425.400" y="544.600" width="25" height="12" fill="#e0e0e0" stroke="#555"/>
</g>
<clipPath id="tc1357"><rect x="1357.7" y="652.2" width="160.4" height="159.5" rx="31"/></clipPath>
<rect x="1357.7" y="652.2" width="160.4" height="159.5" rx="31" fill="#ececec"/>
<rect x="1357.7" y="763.700" width="160.4" height="60" fill="#c0def8" clip-path="url(#tc1357)"/>
<rect x="1357.7" y="652.2" width="160.4" height="159.5" rx="31" fill="none" stroke="#777" stroke-width="0.900"/>
<path d="M1406.3 806.6H1411.7M1406.3 803.5H1411.7M1406.3 800.4H1411.7M1406.3 797.3H1411.7M1406.3 791.1H1411.7M1406.3 788.0H1411.7M1406.3 784.9H1411.7M1406.3 781.8H1411.7M1406.3 775.6H1411.7M1406.3 772.5H1411.7M1406.3 769.4H1411.7M1406.3 766.3H1411.7M1406.3 760.1H1411.7M1406.3 757.0H1411.7M1406.3 753.9H1411.7M1406.3 750.8H1411.7M1406.3 744.6H1411.7M1406.3 741.5H1411.7M1406.3 738.4H1411.7M1406.3 735.3H1411.7M1406.3 729.0H1411.7M1406.3 725.9H1411.7M1406.3 722.8H1411.7M1406.3 719.7H1411.7M1406.3 713.5H1411.7M1406.3 710.4H1411.7M1406.3 707.3H1411.7M1406.3 704.2H1411.7M1406.3 698.0H1411.7M1406.3 694.9H1411.7M1406.3 691.8H1411.7M1406.3 688.7H1411.7M1406.3 682.5H1411.7M1406.3 679.4H1411.7M1406.3 676.3H1411.7M1406.3 673.2H1411.7M1406.3 667.0H1411.7M1406.3 663.9H1411.7M1406.3 660.8H1411.7M1406.3 657.7H1411.7" stroke="#b5b5b5" stroke-opacity=".6" stroke-width="0.700" fill="none"/>
<path d="M1402.9 809.7H1411.7M1402.9 794.2H1411.7M1402.9 778.7H1411.7M1402.9 763.2H1411.7M1402.9 747.7H1411.7M1402.9 732.2H1411.7M1402.9 716.6H1411.7M1402.9 701.1H1411.7M1402.9 685.6H1411.7M1402.9 670.1H1411.7M1402.9 654.6H1411.7" stroke="#999" stroke-opacity=".75" stroke-width="0.900" fill="none"/>
<text x="1400.2" y="811.9" font-size="6.300" fill="#8e8e8e" text-anchor="end" font-family="Liberation Sans, sans-serif">0</text>
<text x="1400.2" y="796.4" font-size="6.300" fill="#8e8e8e" text-anchor="end" font-family="Liberation Sans, sans-serif">10</text>
<text x="1400.2" y="780.9" font-size="6.300" fill="#8e8e8e" text-anchor="end" font-family="Liberation Sans, sans-serif">20</text>
<text x="1400.2" y="765.4" font-size="6.300" fill="#8e8e8e" text-anchor="end" font-family="Liberation Sans, sans-serif">30</text>
<text x="1400.2" y="749.9" font-size="6.300" fill="#8e8e8e" text-anchor="end" font-family="Liberation Sans, sans-serif">40</text>
<text x="1400.2" y="734.4" font-size="6.300" fill="#8e8e8e" text-anchor="end" font-family="Liberation Sans, sans-serif">50</text>
<text x="1400.2" y="718.8" font-size="6.300" fill="#8e8e8e" text-anchor="end" font-family="Liberation Sans, sans-serif">60</text>
<text x="1400.2" y="703.3" font-size="6.300" fill="#8e8e8e" text-anchor="end" font-family="Liberation Sans, sans-serif">70</text>
<text x="1400.2" y="687.8" font-size="6.300" fill="#8e8e8e" text-anchor="end" font-family="Liberation Sans, sans-serif">80</text>
<text x="1400.2" y="672.3" font-size="6.300" fill="#8e8e8e" text-anchor="end" font-family="Liberation Sans, sans-serif">90</text>
<text x="1400.2" y="656.8" font-size="6.300" fill="#8e8e8e" text-anchor="end" font-family="Liberation Sans, sans-serif">100</text>
<clipPath id="tc1678"><rect x="1678.6" y="652.2" width="160.4" height="159.5" rx="31"/></clipPath>
<rect x="1678.6" y="652.2" width="160.4" height="159.5" rx="31" fill="#ececec"/>
<rect x="1678.6" y="763.700" width="160.4" height="60" fill="#c0def8" clip-path="url(#tc1678)"/>
<rect x="1678.6" y="652.2" width="160.4" height="159.5" rx="31" fill="none" stroke="#777" stroke-width="0.900"/>
<path d="M1727.2 806.6H1732.6M1727.2 803.5H1732.6M1727.2 800.4H1732.6M1727.2 797.3H1732.6M1727.2 791.1H1732.6M1727.2 788.0H1732.6M1727.2 784.9H1732.6M1727.2 781.8H1732.6M1727.2 775.6H1732.6M1727.2 772.5H1732.6M1727.2 769.4H1732.6M1727.2 766.3H1732.6M1727.2 760.1H1732.6M1727.2 757.0H1732.6M1727.2 753.9H1732.6M1727.2 750.8H1732.6M1727.2 744.6H1732.6M1727.2 741.5H1732.6M1727.2 738.4H1732.6M1727.2 735.3H1732.6M1727.2 729.0H1732.6M1727.2 725.9H1732.6M1727.2 722.8H1732.6M1727.2 719.7H1732.6M1727.2 713.5H1732.6M1727.2 710.4H1732.6M1727.2 707.3H1732.6M1727.2 704.2H1732.6M1727.2 698.0H1732.6M1727.2 694.9H1732.6M1727.2 691.8H1732.6M1727.2 688.7H1732.6M1727.2 682.5H1732.6M1727.2 679.4H1732.6M1727.2 676.3H1732.6M1727.2 673.2H1732.6M1727.2 667.0H1732.6M1727.2 663.9H1732.6M1727.2 660.8H1732.6M1727.2 657.7H1732.6" stroke="#b5b5b5" stroke-opacity=".6" stroke-width="0.700" fill="none"/>
<path d="M1723.8 809.7H1732.6M1723.8 794.2H1732.6M1723.8 778.7H1732.6M1723.8 763.2H1732.6M1723.8 747.7H1732.6M1723.8 732.2H1732.6M1723.8 716.6H1732.6M1723.8 701.1H1732.6M1723.8 685.6H1732.6M1723.8 670.1H1732.6M1723.8 654.6H1732.6" stroke="#999" stroke-opacity=".75" stroke-width="0.900" fill="none"/>
<text x="1721.1" y="811.9" font-size="6.300" fill="#8e8e8e" text-anchor="end" font-family="Liberation Sans, sans-serif">0</text>
<text x="1721.1" y="796.4" font-size="6.300" fill="#8e8e8e" text-anchor="end" font-family="Liberation Sans, sans-serif">10</text>
<text x="1721.1" y="780.9" font-size="6.300" fill="#8e8e8e" text-anchor="end" font-family="Liberation Sans, sans-serif">20</text>
<text x="1721.1" y="765.4" font-size="6.300" fill="#8e8e8e" text-anchor="end" font-family="Liberation Sans, sans-serif">30</text>
<text x="1721.1" y="749.9" font-size="6.300" fill="#8e8e8e" text-anchor="end" font-family="Liberation Sans, sans-serif">40</text>
<text x="1721.1" y="734.4" font-size="6.300" fill="#8e8e8e" text-anchor="end" font-family="Liberation Sans, sans-serif">50</text>
<text x="1721.1" y="718.8" font-size="6.300" fill="#8e8e8e" text-anchor="end" font-family="Liberation Sans, sans-serif">60</text>
<text x="1721.1" y="703.3" font-size="6.300" fill="#8e8e8e" text-anchor="end" font-family="Liberation Sans, sans-serif">70</text>
<text x="1721.1" y="687.8" font-size="6.300" fill="#8e8e8e" text-anchor="end" font-family="Liberation Sans, sans-serif">80</text>
<text x="1721.1" y="672.3" font-size="6.300" fill="#8e8e8e" text-anchor="end" font-family="Liberation Sans, sans-serif">90</text>
<text x="1721.1" y="656.8" font-size="6.300" fill="#8e8e8e" text-anchor="end" font-family="Liberation Sans, sans-serif">100</text>
<path fill="#fff" stroke="#666" stroke-width="0.900" d="M1573.500 705.700H1622.700Q1624.200 705.700 1624.200 707.200V746L1620.300 751.800L1618 793.600Q1616 804.900 1598.100 804.900Q1580.200 804.900 1578.500 793.600L1576.500 751.800L1572 746V707.200Q1572 705.700 1573.500 705.700Z"/>
<polygon fill="#fcc73c" stroke="#333" stroke-width="0.800" stroke-linejoin="miter" points="1443.700,195.600 1452.600,203.400 1365.900,299.300 1371.600,305.600 1340.700,320 1351.400,287.900 1357,293.300"/></svg>
<span class="t" style="left:52.50px;top:96.00px;font-size:18.08px;color:#fff;letter-spacing:0.189px;-webkit-text-stroke:0.45px #fff;">Home</span>
<span class="t" style="left:52.50px;top:147.00px;font-size:18.08px;color:#fff;letter-spacing:0.410px;-webkit-text-stroke:0.45px #fff;">Alarms</span>
<span class="t" style="left:52.50px;top:198.00px;font-size:18.08px;color:#fff;letter-spacing:0.146px;-webkit-text-stroke:0.45px #fff;">Dashboards</span>
<span class="t" style="left:52.50px;top:249.00px;font-size:18.08px;color:#fff;letter-spacing:0.445px;-webkit-text-stroke:0.45px #fff;">Solution templates</span>
<span class="t" style="left:52.50px;top:300.00px;font-size:18.08px;color:#fff;letter-spacing:0.386px;-webkit-text-stroke:0.45px #fff;">Entities</span>
<span class="t" style="left:52.50px;top:351.00px;font-size:18.08px;color:#fff;letter-spacing:0.531px;-webkit-text-stroke:0.45px #fff;">Profiles</span>
<span class="t" style="left:52.50px;top:402.00px;font-size:18.08px;color:#fff;letter-spacing:0.262px;-webkit-text-stroke:0.45px #fff;">Customers</span>
<span class="t" style="left:52.50px;top:453.00px;font-size:18.08px;color:#fff;letter-spacing:-0.055px;-webkit-text-stroke:0.45px #fff;">Users</span>
<span class="t" style="left:52.50px;top:504.00px;font-size:18.08px;color:#fff;letter-spacing:0.458px;-webkit-text-stroke:0.45px #fff;">Integrations center</span>
<span class="t" style="left:52.50px;top:555.00px;font-size:18.08px;color:#fff;letter-spacing:0.133px;-webkit-text-stroke:0.45px #fff;">Rule chains</span>
<span class="t" style="left:52.50px;top:606.00px;font-size:18.08px;color:#fff;letter-spacing:0.110px;-webkit-text-stroke:0.45px #fff;">Edge management</span>
<span class="t" style="left:52.50px;top:657.00px;font-size:18.08px;color:#fff;letter-spacing:0.265px;-webkit-text-stroke:0.45px #fff;">Advanced features</span>
<span class="t" style="left:52.50px;top:708.00px;font-size:18.08px;color:#fff;letter-spacing:0.047px;-webkit-text-stroke:0.45px #fff;">Resources</span>
<span class="t" style="left:52.50px;top:759.00px;font-size:18.08px;color:#fff;letter-spacing:0.600px;-webkit-text-stroke:0.45px #fff;">Notification center</span>
<span class="t" style="left:52.50px;top:810.00px;font-size:18.08px;color:#fff;letter-spacing:0.481px;-webkit-text-stroke:0.45px #fff;">Mobile center</span>
<span class="t" style="left:52.50px;top:861.00px;font-size:18.08px;color:#fff;letter-spacing:0.110px;-webkit-text-stroke:0.45px #fff;">API usage</span>
<span class="t" style="left:52.50px;top:912.00px;font-size:18.08px;color:#fff;letter-spacing:0.326px;-webkit-text-stroke:0.45px #fff;">White labeling</span>
<span class="t" style="left:52.50px;top:963.00px;font-size:18.08px;color:#fff;letter-spacing:0.425px;-webkit-text-stroke:0.45px #fff;">Settings</span>
<span class="t" style="left:52.50px;top:1014.00px;font-size:18.08px;color:#fff;letter-spacing:0.312px;-webkit-text-stroke:0.45px #fff;">Security</span>
<span class="t" style="left:259.50px;top:242.00px;font-size:14.46px;color:#00695c;font-weight:700;letter-spacing:-0.967px;">NEW</span>
<span class="t" style="left:101.90px;top:28.00px;font-size:29.23px;color:#fff;letter-spacing:-0.937px;">ThingsBoard</span>
<span class="t" style="left:187.30px;top:49.00px;font-size:11.88px;color:#fff;letter-spacing:0.504px;">Professional</span>
<span class="t" style="left:388.40px;top:32.00px;font-size:20.66px;color:rgba(255,255,255,.68);letter-spacing:1.023px;">Dashboards</span>
<span class="t" style="left:608.20px;top:32.00px;font-size:20.66px;color:rgba(255,255,255,.68);letter-spacing:0.690px;">Groups</span>
<span class="t" style="left:777.80px;top:32.00px;font-size:20.66px;color:rgba(255,255,255,.68);letter-spacing:0.389px;">SCADA Oil &amp; Gas</span>
<span class="t" style="left:1045.80px;top:32.00px;font-size:20.66px;color:#fff;letter-spacing:0.667px;">SCADA Oil &amp; Gas Drilling system</span>
<span class="t" style="left:535.00px;top:29.00px;font-size:18.08px;color:#fff;transform:scaleX(1.1);transform-origin:0 50%;">&gt;</span>
<span class="t" style="left:705.80px;top:29.00px;font-size:18.08px;color:#fff;transform:scaleX(1.1);transform-origin:0 50%;">&gt;</span>
<span class="t" style="left:973.80px;top:29.00px;font-size:18.08px;color:#fff;transform:scaleX(1.1);transform-origin:0 50%;">&gt;</span>
<span class="t" style="left:1608.88px;top:15.00px;font-size:11.57px;color:#fff;font-weight:700;">6</span>
<span class="t" style="left:1692.90px;top:18.00px;font-size:16.84px;color:#fff;letter-spacing:-0.678px;">John Doe</span>
<span class="t" style="left:1692.90px;top:42.00px;font-size:16.84px;color:#80c3b7;letter-spacing:-0.298px;">Tenant administrator</span>
<span class="t" style="left:337.30px;top:101.00px;font-size:20.66px;color:#fff;font-weight:700;letter-spacing:0.479px;">High performance main</span>
<span class="t" style="left:910.60px;top:101.00px;font-size:20.66px;color:#fff;letter-spacing:-0.026px;">SCADA Oil &amp; Gas Drilling system</span>
<span class="t" style="left:1297.70px;top:101.00px;font-size:20.66px;color:#fff;letter-spacing:-0.352px;">Realtime - last 10 minutes</span>
<span class="t" style="left:1657.40px;top:101.00px;font-size:18.08px;color:#fff;letter-spacing:0.062px;-webkit-text-stroke:0.45px #fff;">Edit mode</span>
<span class="t" style="left:352.90px;top:173.00px;font-size:15.49px;color:#979290;letter-spacing:-0.034px;">Status:</span>
<span class="t" style="left:412.20px;top:172.00px;font-size:18.08px;color:#0a2a8a;letter-spacing:-0.207px;">Active</span>
<span class="t" style="left:560.90px;top:174.00px;font-size:16.53px;color:#111;font-weight:700;letter-spacing:0.458px;">Main</span>
<span class="t" style="left:749.55px;top:174.00px;font-size:16.53px;color:#111;font-weight:700;letter-spacing:0.362px;">Data</span>
<span class="t" style="left:913.50px;top:174.00px;font-size:16.53px;color:#111;font-weight:700;letter-spacing:0.110px;">Drilling rig</span>
<span class="t" style="left:1103.40px;top:174.00px;font-size:16.53px;color:#111;font-weight:700;letter-spacing:0.350px;">Preventer</span>
<span class="t" style="left:1287.65px;top:174.00px;font-size:16.53px;color:#111;font-weight:700;letter-spacing:0.201px;">Drill bit</span>
<span class="t" style="left:1442.15px;top:174.00px;font-size:16.53px;color:#111;font-weight:700;letter-spacing:0.178px;">Drilling mud</span>
<span class="t" style="left:1625.15px;top:174.00px;font-size:16.53px;color:#111;font-weight:700;letter-spacing:0.195px;">Drawwork</span>
<span class="t" style="left:1797.25px;top:174.00px;font-size:16.53px;color:#111;font-weight:700;letter-spacing:0.340px;">Alarms</span>
<span class="t" style="left:380.20px;top:268.00px;font-size:20.66px;color:#1a1a1a;letter-spacing:-0.560px;-webkit-text-stroke:0.55px #1a1a1a;">Rotary speed</span>
<span class="t" style="left:377.30px;top:507.00px;font-size:20.66px;color:#1a1a1a;letter-spacing:-0.560px;-webkit-text-stroke:0.55px #1a1a1a;">Rotary speed</span>
<span class="t" style="left:377.30px;top:557.00px;font-size:18.08px;color:#1a1a1a;letter-spacing:-0.727px;-webkit-text-stroke:0.55px #1a1a1a;">100 RPM</span>
<span class="t" style="left:377.30px;top:641.00px;font-size:20.66px;color:#1a1a1a;letter-spacing:-0.151px;-webkit-text-stroke:0.55px #1a1a1a;">Tension</span>
<span class="t" style="left:377.30px;top:691.00px;font-size:18.08px;color:#1a1a1a;letter-spacing:-0.130px;-webkit-text-stroke:0.55px #1a1a1a;">181 t</span>
<span class="t" style="left:1424.70px;top:268.00px;font-size:20.66px;color:#1a1a1a;letter-spacing:-0.407px;-webkit-text-stroke:0.55px #1a1a1a;">Flow rate</span>
<span class="t" style="left:380.50px;top:306.00px;font-size:15.49px;color:#0a9548;letter-spacing:-0.568px;-webkit-text-stroke:0.2px #0a9548;">110 RPM</span>
<span class="t" style="left:380.50px;top:326.00px;font-size:15.49px;color:#0a9548;letter-spacing:-0.758px;-webkit-text-stroke:0.2px #0a9548;">105 RPM</span>
<span class="t" style="left:380.50px;top:346.00px;font-size:15.49px;color:#0a9548;letter-spacing:-0.758px;-webkit-text-stroke:0.2px #0a9548;">100 RPM</span>
<span class="t" style="left:389.50px;top:366.00px;font-size:15.49px;color:#0a9548;letter-spacing:-0.988px;-webkit-text-stroke:0.2px #0a9548;">95 RPM</span>
<span class="t" style="left:389.50px;top:386.00px;font-size:15.49px;color:#0a9548;letter-spacing:-0.988px;-webkit-text-stroke:0.2px #0a9548;">90 RPM</span>
<span class="t" style="left:389.50px;top:406.00px;font-size:15.49px;color:#0a9548;letter-spacing:-0.988px;-webkit-text-stroke:0.2px #0a9548;">85 RPM</span>
<span class="t" style="left:1424.60px;top:306.00px;font-size:15.49px;color:#0a9548;letter-spacing:-0.138px;-webkit-text-stroke:0.2px #0a9548;">46 L/s</span>
<span class="t" style="left:1424.60px;top:322.00px;font-size:15.49px;color:#0a9548;letter-spacing:-0.138px;-webkit-text-stroke:0.2px #0a9548;">44 L/s</span>
<span class="t" style="left:1424.60px;top:339.00px;font-size:15.49px;color:#0a9548;letter-spacing:-0.138px;-webkit-text-stroke:0.2px #0a9548;">42 L/s</span>
<span class="t" style="left:1424.60px;top:355.00px;font-size:15.49px;color:#0a9548;letter-spacing:-0.138px;-webkit-text-stroke:0.2px #0a9548;">40 L/s</span>
<span class="t" style="left:1424.60px;top:372.00px;font-size:15.49px;color:#0a9548;letter-spacing:-0.138px;-webkit-text-stroke:0.2px #0a9548;">38 L/s</span>
<span class="t" style="left:1424.60px;top:389.00px;font-size:15.49px;color:#0a9548;letter-spacing:-0.138px;-webkit-text-stroke:0.2px #0a9548;">36 L/s</span>
<span class="t" style="left:1424.60px;top:405.00px;font-size:15.49px;color:#0a9548;letter-spacing:-0.138px;-webkit-text-stroke:0.2px #0a9548;">34 L/s</span>
<span class="t" style="left:450.35px;top:422.00px;font-size:11.67px;color:#757575;letter-spacing:0.282px;">07:34</span>
<span class="t" style="left:1476.75px;top:422.00px;font-size:11.67px;color:#757575;letter-spacing:0.282px;">07:34</span>
<span class="t" style="left:500.35px;top:422.00px;font-size:11.67px;color:#757575;letter-spacing:0.282px;">07:36</span>
<span class="t" style="left:1530.55px;top:422.00px;font-size:11.67px;color:#757575;letter-spacing:0.282px;">07:36</span>
<span class="t" style="left:550.35px;top:422.00px;font-size:11.67px;color:#757575;letter-spacing:0.282px;">07:38</span>
<span class="t" style="left:1584.35px;top:422.00px;font-size:11.67px;color:#757575;letter-spacing:0.282px;">07:38</span>
<span class="t" style="left:600.35px;top:422.00px;font-size:11.67px;color:#757575;letter-spacing:0.282px;">07:40</span>
<span class="t" style="left:1638.15px;top:422.00px;font-size:11.67px;color:#757575;letter-spacing:0.282px;">07:40</span>
<span class="t" style="left:650.35px;top:422.00px;font-size:11.67px;color:#757575;letter-spacing:0.282px;">07:42</span>
<span class="t" style="left:1691.95px;top:422.00px;font-size:11.67px;color:#757575;letter-spacing:0.282px;">07:42</span>
<span class="t" style="left:810.40px;top:266.00px;font-size:16.53px;color:#333;letter-spacing:0.179px;-webkit-text-stroke:0.55px #333;">Reset position</span>
<span class="t" style="left:828.05px;top:503.00px;font-size:16.53px;color:#111;letter-spacing:-0.223px;-webkit-text-stroke:0.4px #111;">Rotor</span>
<span class="t" style="left:802.15px;top:536.00px;font-size:12.4px;color:#111;font-weight:700;letter-spacing:-0.519px;">On</span>
<span class="t" style="left:875.65px;top:536.00px;font-size:12.4px;color:#111;font-weight:700;letter-spacing:0.405px;">Off</span>
<span class="t" style="left:1229.25px;top:449.00px;font-size:16.53px;color:#111;letter-spacing:-0.685px;-webkit-text-stroke:0.4px #111;">Pump</span>
<span class="t" style="left:1204.15px;top:482.00px;font-size:12.4px;color:#111;font-weight:700;letter-spacing:-0.519px;">On</span>
<span class="t" style="left:1277.65px;top:482.00px;font-size:12.4px;color:#111;font-weight:700;letter-spacing:0.405px;">Off</span>
<span class="t" style="left:1149.15px;top:744.00px;font-size:21.28px;color:#111;letter-spacing:0.387px;-webkit-text-stroke:0.4px #111;">Preventer</span>
<span class="t" style="left:1151.15px;top:777.00px;font-size:12.4px;color:#111;font-weight:700;letter-spacing:-0.519px;">On</span>
<span class="t" style="left:1224.65px;top:777.00px;font-size:12.4px;color:#111;font-weight:700;letter-spacing:0.405px;">Off</span>
<span class="t" style="left:449.80px;top:798.00px;font-size:21.28px;color:#111;letter-spacing:0.781px;-webkit-text-stroke:0.4px #111;">Drawwork</span>
<span class="t" style="left:454.15px;top:831.00px;font-size:12.4px;color:#111;font-weight:700;letter-spacing:-0.519px;">On</span>
<span class="t" style="left:527.65px;top:831.00px;font-size:12.4px;color:#111;font-weight:700;letter-spacing:0.405px;">Off</span>
<span class="t" style="left:1173.75px;top:224.00px;font-size:14.67px;color:#6a6a6a;letter-spacing:0.536px;">Well depth (m)</span>
<span class="t" style="left:1173.40px;top:257.00px;font-size:20.66px;color:#1f1f1f;letter-spacing:-0.118px;">4800</span>
<span class="t" style="left:1173.75px;top:322.00px;font-size:14.67px;color:#6a6a6a;letter-spacing:0.718px;">Drill speed (m/h)</span>
<span class="t" style="left:1173.40px;top:356.00px;font-size:20.66px;color:#1f1f1f;letter-spacing:0.016px;">30</span>
<span class="t" style="left:1417.50px;top:493.00px;font-size:17.56px;color:#111;letter-spacing:-0.398px;">Valve</span>
<span class="t" style="left:1411.90px;top:520.00px;font-size:16.11px;color:#0a2a8a;letter-spacing:-1.026px;">Opened</span>
<span class="t" style="left:1563.75px;top:522.00px;font-size:17.04px;color:#111;letter-spacing:-0.006px;">Flow rate</span>
<span class="t" style="left:1452.90px;top:815.00px;font-size:18.08px;color:#111;letter-spacing:-0.773px;">Tank 1</span>
<span class="t" style="left:1747.75px;top:815.00px;font-size:18.08px;color:#111;letter-spacing:-0.553px;">Tank 2</span>
<span class="t" style="left:868.70px;top:759.00px;font-size:15.49px;color:#111;letter-spacing:-0.299px;-webkit-text-stroke:0.6px #111;">Well depth</span>
<span class="t" style="left:894.35px;top:954.00px;font-size:15.49px;color:#111;-webkit-text-stroke:0.6px #111;">m</span>
<span class="t" style="left:908.60px;top:809.00px;font-size:16.53px;color:#0a2a8a;letter-spacing:-0.517px;">3210</span>
<span class="t" style="left:912.20px;top:774.00px;font-size:9.5px;color:#7a746e;">0</span>
<span class="t" style="left:912.40px;top:943.00px;font-size:9.5px;color:#7a746e;letter-spacing:-0.605px;">15000</span>
</body></html>
